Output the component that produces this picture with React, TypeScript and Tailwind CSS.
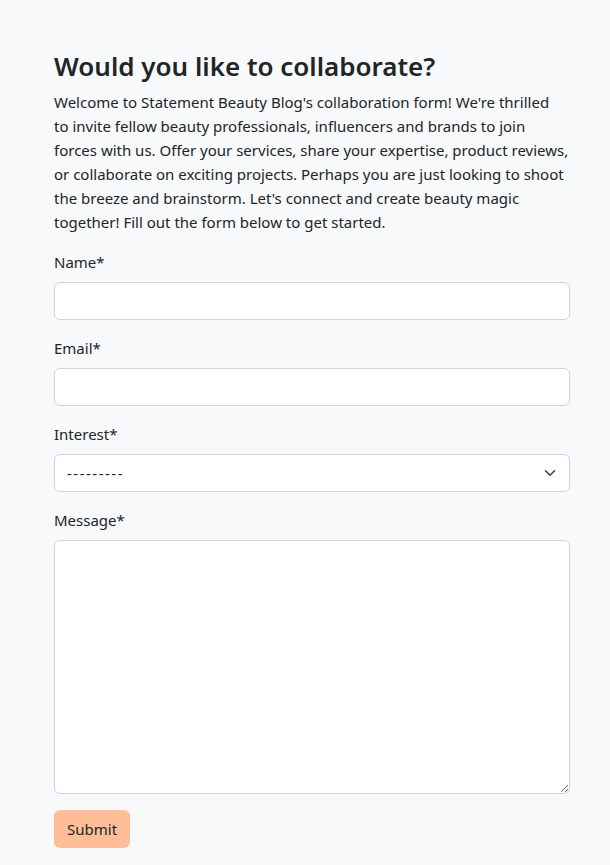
import React from 'react';

const lines = [
  "Welcome to Statement Beauty Blog's collaboration form! We're thrilled",
  'to invite fellow beauty professionals, influencers and brands to join',
  'forces with us. Offer your services, share your expertise, product reviews,',
  'or collaborate on exciting projects. Perhaps you are just looking to shoot',
  "the breeze and brainstorm. Let's connect and create beauty magic",
  'together! Fill out the form below to get started.',
];

const field =
  'block w-full h-[38px] rounded-[6px] border border-[#ced4da] bg-white px-3 text-base text-[#212529] outline-none';

export default function App() {
  return (
    <div
      className="min-h-[865px] bg-[#f8f9fa] text-[#212529]"
      style={{ fontFamily: '"Noto Sans", "Open Sans", sans-serif' }}
    >
      <div className="ml-[54px] w-[516px] pt-[50px] pb-4">
        <h2 className="mb-2 text-[26px] font-semibold leading-[32px]">Would you like to collaborate?</h2>

        {/* Intro text */}
        <p className="mb-4 text-[15px] leading-6">
          {lines.map((l) => (
            <span key={l} className="block whitespace-nowrap">
              {l}
            </span>
          ))}
        </p>

        <form>
          <div className="mb-4">
            <label className="mb-2 block text-[15px] leading-6">Name*</label>
            <input type="text" className={field} />
          </div>

          <div className="mb-4">
            <label className="mb-2 block text-[15px] leading-6">Email*</label>
            <input type="email" className={field} />
          </div>

          <div className="mb-4">
            <label className="mb-2 block text-[15px] leading-6">Interest*</label>
            <div className="relative">
              <select className={field + ' appearance-none text-[15px] tracking-[1.5px]'} defaultValue="">
                <option value="">---------</option>
              </select>
              <svg
                className="pointer-events-none absolute right-3 top-[13px]"
                width="16"
                height="12"
                viewBox="0 0 16 16"
                fill="none"
                stroke="#343a40"
                strokeWidth="2"
                strokeLinecap="round"
                strokeLinejoin="round"
              >
                <path d="m2 5 6 6 6-6" />
              </svg>
            </div>
          </div>

          <div className="mb-4">
            <label className="mb-2 block text-[15px] leading-6">Message*</label>
            <textarea className="block h-[254px] w-full rounded-[6px] border border-[#ced4da] bg-white px-3 py-1.5 outline-none" />
          </div>

          <button
            type="button"
            className="h-[38px] rounded-[6px] bg-[#ffbe98] px-[13px] text-[15px] text-[#212529]"
          >
            Submit
          </button>
        </form>
      </div>
    </div>
  );
}
